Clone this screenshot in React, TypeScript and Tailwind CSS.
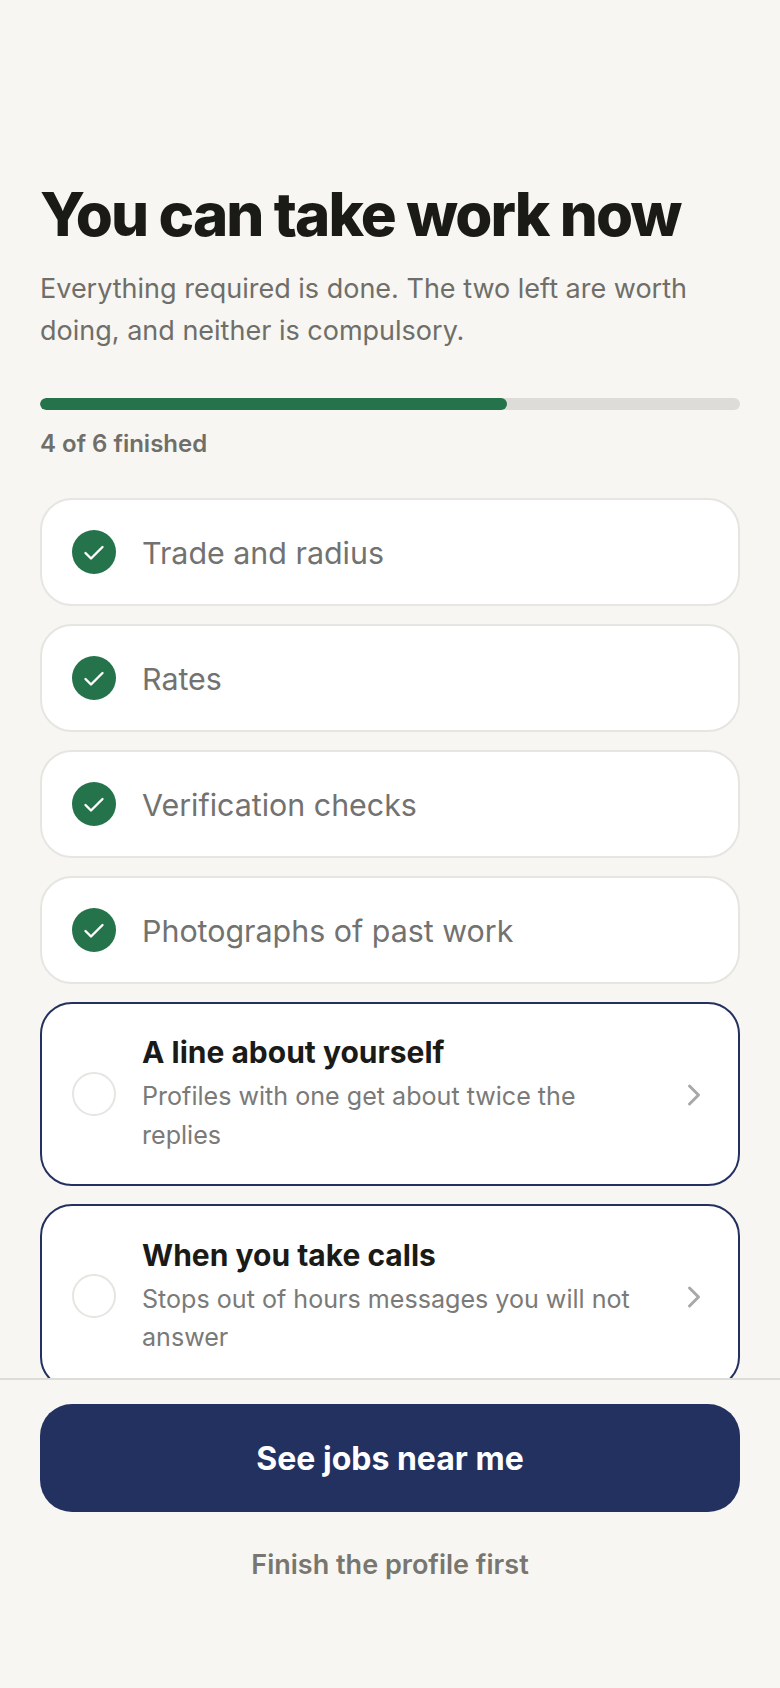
import React from "react";

const DONE = ["Trade and radius", "Rates", "Verification checks", "Photographs of past work"];
const TODO = [
  { title: "A line about yourself", hint: "Profiles with one get about twice the replies" },
  { title: "When you take calls", hint: "Stops out of hours messages you will not answer" },
];

function DoneRow({ label }: { label: string }) {
  return (
    <div className="flex h-[108px] items-center gap-[26px] rounded-[32px] border-2 border-[#e6e5e1] bg-white px-[30px]">
      <div className="flex h-[44px] w-[44px] shrink-0 items-center justify-center rounded-full bg-[#24734b]">
        <svg width="24" height="24" viewBox="0 0 24 24" fill="none" stroke="#fff" strokeWidth="2.4" strokeLinecap="round" strokeLinejoin="round">
          <path d="M3.5 13 9 18.5 20.5 7" />
        </svg>
      </div>
      <span className="pt-[2px] text-[30.4px] leading-[44px] text-[#727270]">{label}</span>
    </div>
  );
}

function TodoRow({ title, hint }: { title: string; hint: string }) {
  return (
    <div className="flex items-center gap-[26px] rounded-[32px] border-2 border-[#233160] bg-white px-[30px] py-[29.5px]">
      <div className="h-[44px] w-[44px] shrink-0 rounded-full border-2 border-[#e6e5e1]" />
      <div className="min-w-0 flex-1">
        <div className="text-[30px] font-bold leading-[38px] text-[#1a1a17]">{title}</div>
        <div className="mt-[6px] text-[25.1px] leading-[38.75px] text-[#7a7a78]">{hint}</div>
      </div>
      <svg className="mt-[2px] shrink-0" width="28" height="28" viewBox="0 0 28 28" fill="none" stroke="#a8a8a6" strokeWidth="3" strokeLinecap="round" strokeLinejoin="round">
        <path d="M9.5 5 18.5 14 9.5 23" />
      </svg>
    </div>
  );
}

export default function App() {
  return (
    <div className="flex h-[1688px] w-[780px] flex-col overflow-hidden bg-[#f7f6f2] font-['Inter',sans-serif]">
      <div className="min-h-0 flex-1 overflow-hidden px-[40px] pt-[176px]">
        <h1 className="text-[60px] font-extrabold leading-[76px] tracking-[-1.9px] text-[#1a1a17]">You can take work now</h1>
        <p className="mt-[16px] text-[27px] leading-[41.85px] text-[#6f6e69]">
          Everything required is done. The two left are worth doing, and neither is compulsory.
        </p>
        <div className="mt-[46px] h-[12px] overflow-hidden rounded-full bg-[#dddcd8]">
          <div className="h-full w-2/3 rounded-full bg-[#24734b]" />
        </div>
        <div className="mt-[17px] text-[24px] font-semibold leading-[34px] text-[#6f6e69]">4 of 6 finished</div>
        <div className="mt-[37px] flex flex-col gap-[18px]">
          {DONE.map((label) => (
            <DoneRow key={label} label={label} />
          ))}
          {TODO.map((item) => (
            <TodoRow key={item.title} title={item.title} hint={item.hint} />
          ))}
        </div>
      </div>
      <div className="flex h-[310px] shrink-0 flex-col border-t-2 border-[#dddcd8] px-[40px] pt-[24px]">
        <button className="flex h-[108px] items-center justify-center rounded-[32px] bg-[#233160] pt-[2px] text-[32px] font-bold text-white">
          See jobs near me
        </button>
        <button className="mt-[33px] text-[27px] font-semibold leading-[40px] text-[#78766f]">Finish the profile first</button>
      </div>
    </div>
  );
}
